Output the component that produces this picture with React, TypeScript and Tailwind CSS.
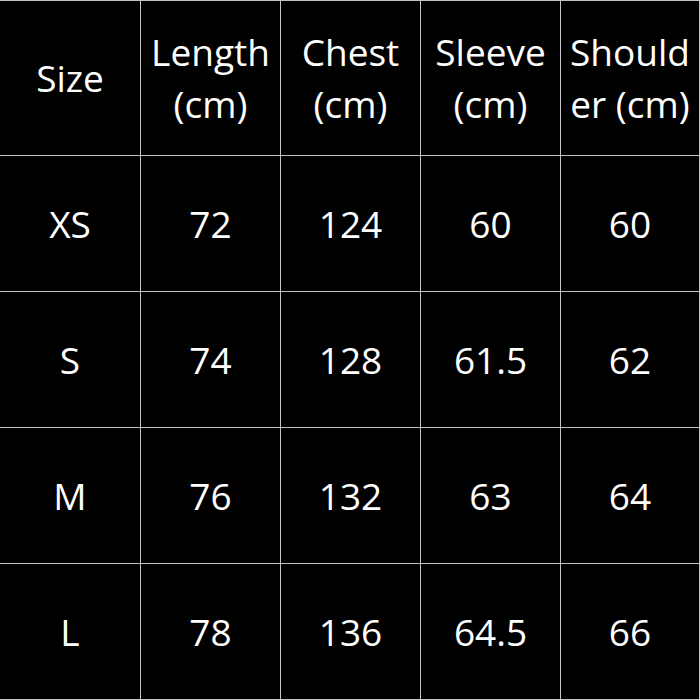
import React from "react";

const header: string[][] = [
  ["Size"],
  ["Length", "(cm)"],
  ["Chest", "(cm)"],
  ["Sleeve", "(cm)"],
  ["Should", "er (cm)"],
];

const rows: string[][] = [
  ["XS", "72", "124", "60", "60"],
  ["S", "74", "128", "61.5", "62"],
  ["M", "76", "132", "63", "64"],
  ["L", "78", "136", "64.5", "66"],
];

const App: React.FC = () => {
  return (
    <div
      className="w-[700px] h-[700px] bg-black text-white border-t border-b border-r border-[#c4c4c4] text-[37px] leading-[52px]"
      style={{ fontFamily: '"Open Sans", "Liberation Sans", sans-serif' }}
    >
      {/* header */}
      <div className="grid grid-cols-[140px_140px_140px_140px_139px] h-[154px]">
        {header.map((lines, i) => (
          <div
            key={i}
            className={`flex flex-col items-center justify-center text-center whitespace-nowrap ${
              i > 0 ? "border-l border-[#c4c4c4]" : ""
            }`}
          >
            {lines.map((l) => (
              <span key={l}>{l}</span>
            ))}
          </div>
        ))}
      </div>

      {/* body */}
      {rows.map((row) => (
        <div
          key={row[0]}
          className="grid grid-cols-[140px_140px_140px_140px_139px] h-[136px] border-t border-[#c4c4c4]"
        >
          {row.map((cell, i) => (
            <div
              key={i}
              className={`flex items-center justify-center ${
                i > 0 ? "border-l border-[#c4c4c4]" : ""
              }`}
            >
              {cell}
            </div>
          ))}
        </div>
      ))}
    </div>
  );
};

export default App;
